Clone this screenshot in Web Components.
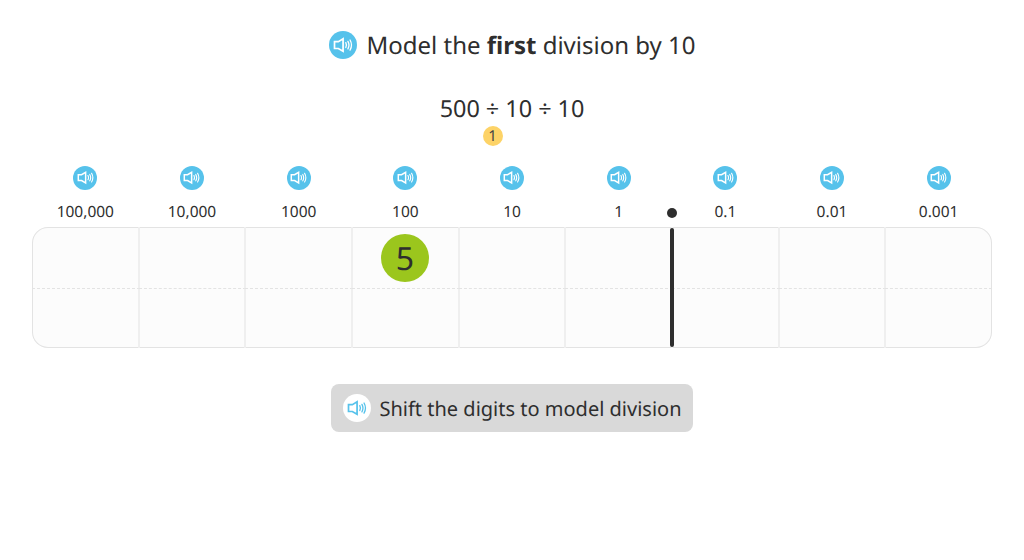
<!DOCTYPE html>
<html><head><meta charset="utf-8"><title>Model division</title>
<style>
html,body{margin:0;padding:0;background:#fff}
body{font-family:"Noto Sans",sans-serif;color:#2e2e2e;width:1024px;height:560px;overflow:hidden;text-rendering:geometricPrecision}
</style></head><body>
<div id="app"></div>
<template id="t-speaker"><style>
:host{display:inline-flex;align-items:center;justify-content:center;width:var(--size,24px);height:var(--size,24px);border-radius:50%;background:var(--bg,#56c2eb);color:var(--fg,#fff);flex:none}
svg{width:72%;height:72%;display:block}
</style><svg viewBox="0 0 20 20" fill="none" stroke="currentColor" stroke-linejoin="miter"><path d="M1.500 6.600h3.800L10 3.800v12.400L5.300 13.400H1.500z" stroke-width="1.700"/><path d="M12.700 7.600c.8 1.500.8 3.300 0 4.800M14.800 6.300c1.300 2.300 1.300 5.100 0 7.400M16.900 5c1.800 3.100 1.800 6.900 0 10" stroke-width="1.300" stroke-linecap="round"/></svg></template>

<template id="t-title"><style>
:host{display:flex;justify-content:center;align-items:center;gap:9px;font-size:24px;line-height:32px;height:32px;white-space:pre}
b{font-weight:700}
span{margin-top:2px}
speaker-icon{--size:28px;margin-left:1px}
</style><speaker-icon></speaker-icon><span><slot></slot></span></template>

<template id="t-equation"><style>
:host{display:flex;flex-direction:column;align-items:center;font-size:23.400px;line-height:32px}
.wrap{position:relative;height:32px;line-height:30px}
.badge{position:absolute;left:43px;top:33px;width:20px;height:20px;border-radius:50%;background:#fdd367;font-size:15px;line-height:20px;text-align:center;color:#444}
</style><div class="wrap"><slot></slot><span class="badge">1</span></div></template>

<template id="t-head"><style>
:host{display:flex;flex-direction:column;align-items:center;gap:11px;font-size:15.500px;line-height:20px}
</style><speaker-icon></speaker-icon><span><slot></slot></span></template>

<template id="t-chart"><style>
:host{display:block;position:relative;width:960px}
.heads{display:grid;grid-template-columns:repeat(9,1fr)}
.table{box-sizing:border-box;height:121px;margin-top:6px;box-shadow:inset 0 0 0 1px #e3e3e3;border-radius:16px;background:#fcfcfc;display:grid;grid-template-columns:repeat(9,1fr);grid-template-rows:62px 1fr;overflow:hidden}
.cell{box-sizing:border-box;border-right:2px solid #efefef;margin-right:-1px;display:flex;align-items:center;justify-content:center}
.cell:nth-child(9n){border-right:0;margin-right:0}
.cell.top{border-bottom:1px dashed #e3e3e3}
.digit{width:48px;height:48px;border-radius:50%;background:#9bc61d;font-size:32px;line-height:50px;text-align:center;margin-top:1px}
.dot{position:absolute;left:634.500px;top:42px;width:10px;height:10px;border-radius:50%;background:#2e2e2e}
.line{position:absolute;left:637.500px;top:62px;width:4px;height:119px;border-radius:2px;background:#2e2e2e}
</style><div class="heads" id="h"></div><div class="table" id="g"></div><span class="dot"></span><span class="line"></span></template>

<template id="t-button"><style>
:host{display:inline-flex;align-items:center;gap:8px;box-sizing:border-box;height:48px;padding:0 11px 0 12px;border-radius:8px;background:#d9d9d9;font-size:20px;line-height:28px;white-space:nowrap}
span{margin-top:2px}
speaker-icon{--size:28px;--bg:#fff;--fg:#56c2eb}
</style><speaker-icon></speaker-icon><span><slot></slot></span></template>

<template id="t-app"><style>
:host{display:flex;flex-direction:column;align-items:center;padding-top:29px}
model-title{margin-bottom:32px}
division-equation{margin-bottom:41px}
model-button{margin-top:36px}
</style><model-title>Model the <b>first</b> division by 10</model-title>
<division-equation>500 ÷ 10 ÷ 10</division-equation>
<place-chart></place-chart>
<model-button>Shift the digits to model division</model-button></template>

<script>
function def(name,tid,init){
  customElements.define(name,class extends HTMLElement{
    constructor(){super();const r=this.attachShadow({mode:'open'});r.appendChild(document.getElementById(tid).content.cloneNode(true));}
    connectedCallback(){if(init&&!this._d){this._d=1;init(this.shadowRoot);}}
  });
}
def('speaker-icon','t-speaker');
def('model-title','t-title');
def('division-equation','t-equation');
def('place-head','t-head');
def('model-button','t-button');
def('place-chart','t-chart',r=>{
  const labels=['100,000','10,000','1000','100','10','1','0.1','0.01','0.001'];
  const h=r.getElementById('h'),g=r.getElementById('g');
  labels.forEach(l=>{const e=document.createElement('place-head');e.textContent=l;h.appendChild(e);});
  for(let row=0;row<2;row++)labels.forEach((l,i)=>{
    const c=document.createElement('div');c.className='cell '+(row?'bot':'top');
    if(row===0&&i===3){const d=document.createElement('div');d.className='digit';d.textContent='5';c.appendChild(d);}
    g.appendChild(c);
  });
});
def('model-app','t-app');
document.getElementById('app').appendChild(document.createElement('model-app'));
</script>
</body></html>
